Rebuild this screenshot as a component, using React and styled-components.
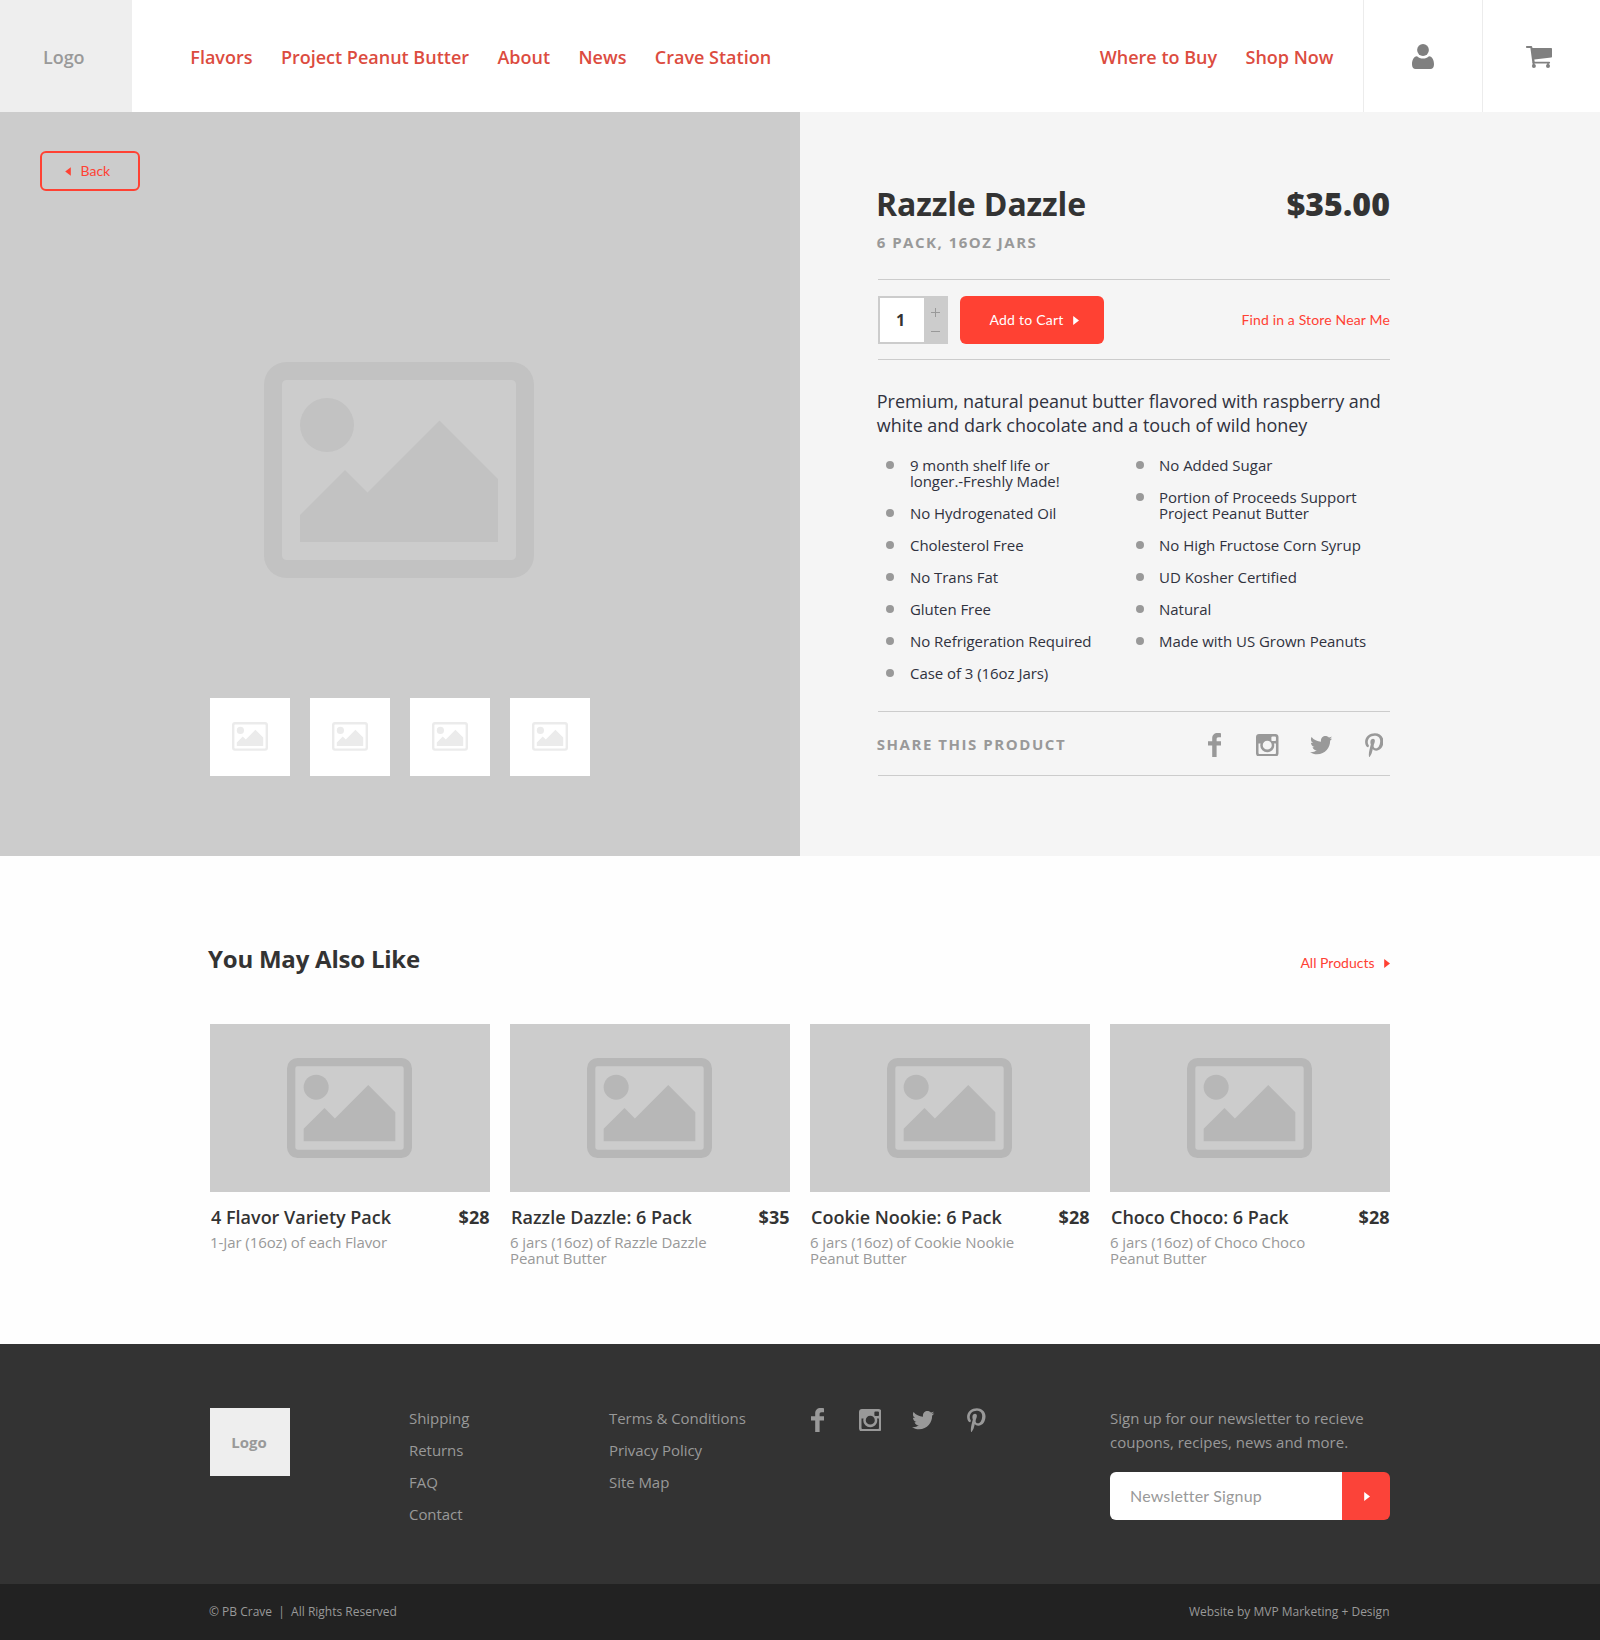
import React from "react";
import styled, { createGlobalStyle, css } from "styled-components";
import { FaTwitter, FaPinterestP } from "react-icons/fa";

const sans = '"Open Sans", "Noto Sans", sans-serif';
const ui = 'Lato, "Open Sans", sans-serif';
const red = "#ff4133";
const dark = "#333333";
const grey = "#999999";

const GlobalStyle = createGlobalStyle`
  *, *::before, *::after { box-sizing: border-box; }
  body { margin: 0; background: #fefefe; font-family: ${sans}; color: ${dark}; }
  a { color: inherit; text-decoration: none; }
  h1, h2, h3, p, ul { margin: 0; padding: 0; }
  ul { list-style: none; }
  svg { display: block; flex: none; }
`;

const Page = styled.div`
  width: 1600px;
  height: 1640px;
  display: flex;
  flex-direction: column;
  overflow: hidden;
`;

/* Header */
const Header = styled.header`
  height: 112px;
  display: flex;
  background: #fff;
`;
const LogoBlock = styled.a`
  width: 132px;
  padding: 2px 4.5px 0 0;
  display: flex;
  align-items: center;
  justify-content: center;
  background: #eee;
  color: ${grey};
  font: 600 18px/24px ${sans};
`;
const Nav = styled.nav`
  display: flex;
  align-items: center;
  gap: 28.4px;
  padding-top: 2px;
  color: #dc4c3f;
  font: 600 18px/24px ${sans};
  white-space: nowrap;
`;
const MainNav = styled(Nav)`
  margin-left: 58.3px;
`;
const ShopNav = styled(Nav)`
  margin-left: auto;
  margin-right: 29.5px;
`;
const IconCell = styled.a`
  width: ${(p) => p.$width}px;
  padding: ${(p) => p.$drop || 0}px ${(p) => p.$shift || 0}px 0 0;
  display: flex;
  align-items: center;
  justify-content: center;
  border-left: 1px solid #ececec;
  color: #808080;
`;

/* Hero */
const Hero = styled.main`
  height: 744px;
  display: grid;
  grid-template-columns: 800px 800px;
`;
const Gallery = styled.section`
  padding: 39px 40px 0;
  background: #ccc;
`;
const BackButton = styled.button`
  width: 100px;
  height: 40px;
  padding: 0 0 0 23px;
  display: flex;
  align-items: center;
  gap: 9.5px;
  border: 2px solid ${red};
  border-radius: 6px;
  background: transparent;
  color: ${red};
  font: 400 14px/20px ${ui};
`;
const MainPicture = styled.div`
  margin: 171px 0 0 224px;
  color: #c2c2c2;
`;
const Thumbs = styled.div`
  display: flex;
  gap: 20px;
  margin: 120px 0 0 170px;
`;
const Thumb = styled.a`
  width: 80px;
  height: 78px;
  padding-bottom: 1px;
  display: flex;
  align-items: center;
  justify-content: center;
  background: #fff;
  color: #ebebeb;
`;

const Info = styled.section`
  padding: 70px 210px 0 78px;
  background: #f5f5f5;
`;
const TitleRow = styled.div`
  display: flex;
  justify-content: space-between;
  margin-left: -2px;
  font: 700 32px/44px ${sans};
`;
const Title = styled.h1`
  font: inherit;
  letter-spacing: -0.12px;
`;
const Price = styled.span`
  font-weight: 800;
  letter-spacing: 0.1px;
`;
const Overline = styled.h3`
  margin-left: -1.3px;
  color: ${grey};
  font: 700 15px/20px ${sans};
  letter-spacing: 1.5px;
`;
const Subtitle = styled(Overline)`
  margin-top: 6px;
`;
const ShareLabel = styled(Overline)`
  margin-bottom: 2px;
  letter-spacing: 1.55px;
`;
const Purchase = styled.div`
  margin-top: 27px;
  padding: 16px 0 15px;
  display: flex;
  align-items: center;
  border: solid #ccc;
  border-width: 1px 0;
`;
const Quantity = styled.div`
  width: 70px;
  height: 48px;
  display: flex;
  border: 2px solid #ccc;
  background: #ccc;
`;
const Amount = styled.div`
  width: 44px;
  padding: 0 3px 0 0;
  display: flex;
  align-items: center;
  justify-content: center;
  background: #fff;
  font: 700 16px/22px ${sans};
`;
const Stepper = styled.div`
  flex: 1;
  display: flex;
  flex-direction: column;
  align-items: center;
  justify-content: center;
  padding: 4px 0 0 1px;
  gap: 10px;
  color: ${grey};
`;
const CartButton = styled.button`
  width: 144px;
  height: 48px;
  margin-left: 12px;
  padding: 0 0 0 29.5px;
  display: flex;
  align-items: center;
  gap: 9.5px;
  border: 0;
  border-radius: 6px;
  background: ${red};
  color: #fff;
  font: 400 14px/20px ${ui};
  letter-spacing: 0.22px;
`;
const TextLink = styled.a`
  margin-left: auto;
  display: flex;
  align-items: center;
  gap: 9.5px;
  color: ${red};
  font: 400 14px/20px ${ui};
  letter-spacing: ${(p) => p.$tracking || 0}px;
  white-space: nowrap;
`;
const Description = styled.p`
  margin: 29px 0 0 -1.2px;
  color: #30323e;
  font: 400 18px/24px ${sans};
  letter-spacing: -0.03px;
`;
const Features = styled.div`
  display: grid;
  grid-template-columns: 250px 250px;
  align-items: start;
  margin: 20px 0 0 8px;
`;
const FeatureList = styled.ul`
  display: flex;
  flex-direction: column;
  gap: 16px;
  width: ${(p) => p.$width}px;
  color: #30323e;
  font: 400 15px/16px ${sans};
  letter-spacing: ${(p) => p.$tracking}px;
`;
const Feature = styled.li`
  display: flex;
  gap: ${(p) => p.$gap}px;
  &::before {
    content: "";
    flex: none;
    width: 8px;
    height: 8px;
    margin-top: 4px;
    border-radius: 50%;
    background: ${grey};
  }
`;
const Share = styled.div`
  height: 65px;
  margin-top: 30px;
  padding: 3px 4px 0 0;
  display: flex;
  align-items: center;
  justify-content: space-between;
  border: solid #ccc;
  border-width: 1px 0;
`;
const SocialRow = styled.div`
  display: flex;
  gap: 29.2px;
  color: ${grey};
  ${(p) =>
    p.$footer &&
    css`
      margin-left: -5px;
    `}
`;
const SocialLink = styled.a`
  width: 24px;
  height: 24px;
  display: flex;
  align-items: center;
  justify-content: center;
`;
const Bird = styled(FaTwitter)`
  width: 22.4px;
  height: 22.4px;
`;
const Pin = styled(FaPinterestP)`
  width: 18.6px;
  height: 24.6px;
`;

/* Related products */
const Related = styled.section`
  height: 488px;
  padding: 87px 210px 0;
`;
const RelatedHead = styled.div`
  display: flex;
  align-items: baseline;
  margin-left: -2px;
`;
const Heading = styled.h2`
  font: 700 24px/32px ${sans};
  letter-spacing: -0.22px;
`;
const Cards = styled.div`
  display: grid;
  grid-template-columns: repeat(4, 280px);
  gap: 20px;
  margin-top: 49px;
`;
const CardImage = styled.div`
  height: 168px;
  padding-right: 1px;
  display: flex;
  align-items: center;
  justify-content: center;
  background: #ccc;
  color: #b7b7b7;
`;
const CardTitle = styled.h3`
  display: flex;
  justify-content: space-between;
  margin: 13px 0.5px 0 1px;
  font: 600 18px/24px ${sans};
`;
const CardPrice = styled.span`
  font-weight: 700;
`;
const CardText = styled.p`
  width: 215px;
  margin-top: 5px;
  color: ${grey};
  font: 400 15px/16px ${sans};
  letter-spacing: -0.08px;
`;

/* Footer */
const Footer = styled.footer`
  height: 240px;
  padding: 64px 210px 0;
  display: grid;
  grid-template-columns: 199px 200px 201px 300px 280px;
  align-items: start;
  background: ${dark};
  color: ${grey};
  font: 400 15px/24px ${sans};
`;
const FooterLogo = styled.a`
  width: 80px;
  height: 68px;
  display: flex;
  align-items: center;
  justify-content: center;
  padding-right: 2px;
  background: #eee;
  font-weight: 700;
`;
const FooterLinks = styled.ul`
  margin-top: -6px;
  line-height: 32px;
  letter-spacing: -0.05px;
`;
const Newsletter = styled.div`
  margin-top: -2px;
`;
const Signup = styled.form`
  height: 48px;
  margin-top: 18px;
  display: flex;
  border-radius: 6px;
  overflow: hidden;
`;
const SignupInput = styled.input`
  width: 232px;
  padding: 0 0 0 20px;
  border: 0;
  outline: 0;
  background: #fff;
  font: 400 16px/22px ${ui};
  letter-spacing: 0.17px;
  &::placeholder { color: ${grey}; opacity: 1; }
`;
const SignupButton = styled.button`
  width: 48px;
  padding: 0 0 0 1px;
  display: flex;
  align-items: center;
  justify-content: center;
  border: 0;
  background: #fb4339;
  color: #fff;
`;
const BottomBar = styled.div`
  height: 56px;
  padding: 0 210.5px 1px 209px;
  display: flex;
  align-items: center;
  justify-content: space-between;
  background: #222;
  color: ${grey};
  font: 400 12px/16px ${sans};
  white-space: pre;
`;

function Picture({ width, height }) {
  return (
    <svg width={width} height={height} viewBox="0 0 270 216" fill="currentColor">
      <path
        fillRule="evenodd"
        d="M22.5 0h225A22.5 22.5 0 0 1 270 22.5v171a22.5 22.5 0 0 1-22.5 22.5h-225A22.5 22.5 0 0 1 0 193.5v-171A22.5 22.5 0 0 1 22.5 0zM22.5 18a4.5 4.5 0 0 0-4.5 4.5v171a4.5 4.5 0 0 0 4.5 4.5h225a4.5 4.5 0 0 0 4.5-4.5v-171a4.5 4.5 0 0 0-4.5-4.5z"
      />
      <circle cx="63" cy="63" r="27" />
      <path d="M36 153l45-45 22.5 22.5 72-72L234 117v63H36z" />
    </svg>
  );
}

function Arrow({ left }) {
  return (
    <svg width="6" height="9" viewBox="0 0 6 9" fill="currentColor">
      <path d={left ? "M5.8.2v8.6L.2 4.5z" : "M.2 0v9L6 4.5z"} />
    </svg>
  );
}

function UserIcon() {
  return (
    <svg width="22" height="25" viewBox="0 0 22 25" fill="currentColor">
      <circle cx="11" cy="6" r="5.9" />
      <path d="M5 12.2c1.6 1.6 3.7 2.4 6 2.4s4.4-.8 6-2.4c3.6.4 5 4.1 5 8.1 0 3.2-1.2 4.700-3.700 4.700H3.700C1.200 25 0 23.500 0 20.300c0-4 1.400-7.700 5-8.100z" />
    </svg>
  );
}

function CartIcon() {
  return (
    <svg width="26" height="22" viewBox="0 0 26 22" fill="currentColor">
      <path d="M.7 0H5.300c.5 0 .8.300.9.800L6.500 2H25.200c.5 0 .8.300.8.800V10.800c0 .5-.2.700-.7.800L8.300 13.500l.4 2.300H23.200c.6 0 .9.400.9.900s-.3.900-.9.900H7.200c-.4 0-.7-.3-.8-.7L4.400 1.900H.7C.3 1.900 0 1.500 0 1s.3-1 .7-1z" />
      <path d="M6.700 16h1.800v3H6.700zM21.200 16h1.600v3h-1.600z" />
      <circle cx="7.900" cy="20" r="2" />
      <circle cx="22" cy="20" r="2" />
    </svg>
  );
}

function FacebookIcon() {
  return (
    <svg width="13" height="24" viewBox="0 0 13 24" fill="currentColor">
      <path d="M13 .2v4h-2.300c-1.700 0-2.100.8-2.100 2v2.100H13v4.200H8.600V24H4.200V12.500H0V8.300h4.200V5.400C4.200 1.900 6.300 0 9.600 0c1.500 0 2.900.1 3.400.2z" />
    </svg>
  );
}

function InstagramIcon() {
  return (
    <svg width="22.500" height="22.500" viewBox="128 128 1536 1536" fill="currentColor">
      <path d="M1490 1426v-648h-135q20 63 20 131 0 126-64 232.5t-174 168.500-240 62q-197 0-337-135.500t-140-327.500q0-68 20-131h-141v648q0 26 17.500 43.500t43.500 17.500h1069q25 0 43-17.500t18-43.500zm-284-533q0-124-90.500-211.500t-218.500-87.500q-127 0-217.500 87.500t-90.500 211.500 90.500 211.500 217.500 87.500q128 0 218.500-87.500t90.500-211.500zm284-360v-165q0-28-20-48.500t-49-20.500h-174q-29 0-49 20.500t-20 48.500v165q0 29 20 49t49 20h174q29 0 49-20t20-49zm174-208v1142q0 81-58 139t-139 58h-1142q-81 0-139-58t-58-139v-1142q0-81 58-139t139-58h1142q81 0 139 58t58 139z" />
    </svg>
  );
}

function Social({ footer }) {
  return (
    <SocialRow $footer={footer}>
      <SocialLink href="#" aria-label="Facebook"><FacebookIcon /></SocialLink>
      <SocialLink href="#" aria-label="Instagram"><InstagramIcon /></SocialLink>
      <SocialLink href="#" aria-label="Twitter"><Bird /></SocialLink>
      <SocialLink href="#" aria-label="Pinterest"><Pin /></SocialLink>
    </SocialRow>
  );
}

const mainLinks = ["Flavors", "Project Peanut Butter", "About", "News", "Crave Station"];
const shopLinks = ["Where to Buy", "Shop Now"];
const featuresA = [
  "9 month shelf life or longer.-Freshly Made!",
  "No Hydrogenated Oil",
  "Cholesterol Free",
  "No Trans Fat",
  "Gluten Free",
  "No Refrigeration Required",
  "Case of 3 (16oz Jars)",
];
const featuresB = [
  "No Added Sugar",
  "Portion of Proceeds Support Project Peanut Butter",
  "No High Fructose Corn Syrup",
  "UD Kosher Certified",
  "Natural",
  "Made with US Grown Peanuts",
];
const products = [
  { name: "4 Flavor Variety Pack", price: "$28", text: "1-Jar (16oz) of each Flavor" },
  { name: "Razzle Dazzle: 6 Pack", price: "$35", text: "6 jars (16oz) of Razzle Dazzle Peanut Butter" },
  { name: "Cookie Nookie: 6 Pack", price: "$28", text: "6 jars (16oz) of Cookie Nookie Peanut Butter" },
  { name: "Choco Choco: 6 Pack", price: "$28", text: "6 jars (16oz) of Choco Choco Peanut Butter" },
];
const helpLinks = ["Shipping", "Returns", "FAQ", "Contact"];
const legalLinks = ["Terms & Conditions", "Privacy Policy", "Site Map"];

export default function App() {
  return (
    <>
      <GlobalStyle />
      <Page>
        <Header>
          <LogoBlock href="#">Logo</LogoBlock>
          <MainNav>
            {mainLinks.map((l) => <a href="#" key={l}>{l}</a>)}
          </MainNav>
          <ShopNav>
            {shopLinks.map((l) => <a href="#" key={l}>{l}</a>)}
          </ShopNav>
          <IconCell href="#" $width={119} $drop={1} aria-label="Account"><UserIcon /></IconCell>
          <IconCell href="#" $width={118} $shift={5} $drop={2} aria-label="Cart"><CartIcon /></IconCell>
        </Header>

        <Hero>
          <Gallery>
            <BackButton><Arrow left />Back</BackButton>
            <MainPicture><Picture width={270} height={216} /></MainPicture>
            <Thumbs>
              {[0, 1, 2, 3].map((i) => (
                <Thumb href="#" key={i}><Picture width={36} height={28.8} /></Thumb>
              ))}
            </Thumbs>
          </Gallery>
          <Info>
            <TitleRow>
              <Title>Razzle Dazzle</Title>
              <Price>$35.00</Price>
            </TitleRow>
            <Subtitle>6 PACK, 16OZ JARS</Subtitle>
            <Purchase>
              <Quantity>
                <Amount>1</Amount>
                <Stepper>
                  <svg width="9" height="9" viewBox="0 0 9 9" stroke="currentColor">
                    <path d="M0 4.500h9M4.500 0v9" />
                  </svg>
                  <svg width="9" height="9" viewBox="0 0 9 9" stroke="currentColor">
                    <path d="M0 4.500h9" />
                  </svg>
                </Stepper>
              </Quantity>
              <CartButton>Add to Cart<Arrow /></CartButton>
              <TextLink href="#" $tracking={0.15}>Find in a Store Near Me</TextLink>
            </Purchase>
            <Description>
              Premium, natural peanut butter flavored with raspberry and white and dark
              chocolate and a touch of wild honey
            </Description>
            <Features>
              <FeatureList $width={214} $tracking={-0.05}>
                {featuresA.map((f) => <Feature key={f} $gap={16}>{f}</Feature>)}
              </FeatureList>
              <FeatureList $width={240} $tracking={-0.02}>
                {featuresB.map((f) => <Feature key={f} $gap={15}>{f}</Feature>)}
              </FeatureList>
            </Features>
            <Share>
              <ShareLabel>SHARE THIS PRODUCT</ShareLabel>
              <Social />
            </Share>
          </Info>
        </Hero>

        <Related>
          <RelatedHead>
            <Heading>You May Also Like</Heading>
            <TextLink href="#">All Products<Arrow /></TextLink>
          </RelatedHead>
          <Cards>
            {products.map((p) => (
              <article key={p.name}>
                <CardImage><Picture width={125} height={100} /></CardImage>
                <CardTitle>{p.name}<CardPrice>{p.price}</CardPrice></CardTitle>
                <CardText>{p.text}</CardText>
              </article>
            ))}
          </Cards>
        </Related>

        <Footer>
          <FooterLogo href="#">Logo</FooterLogo>
          <FooterLinks>
            {helpLinks.map((l) => <li key={l}><a href="#">{l}</a></li>)}
          </FooterLinks>
          <FooterLinks>
            {legalLinks.map((l) => <li key={l}><a href="#">{l}</a></li>)}
          </FooterLinks>
          <Social footer />
          <Newsletter>
            <p>Sign up for our newsletter to recieve coupons, recipes, news and more.</p>
            <Signup>
              <SignupInput placeholder="Newsletter Signup" />
              <SignupButton type="button" aria-label="Sign up"><Arrow /></SignupButton>
            </Signup>
          </Newsletter>
        </Footer>
        <BottomBar>
          <span>{"© PB Crave  |  All Rights Reserved"}</span>
          <span>Website by MVP Marketing + Design</span>
        </BottomBar>
      </Page>
    </>
  );
}
